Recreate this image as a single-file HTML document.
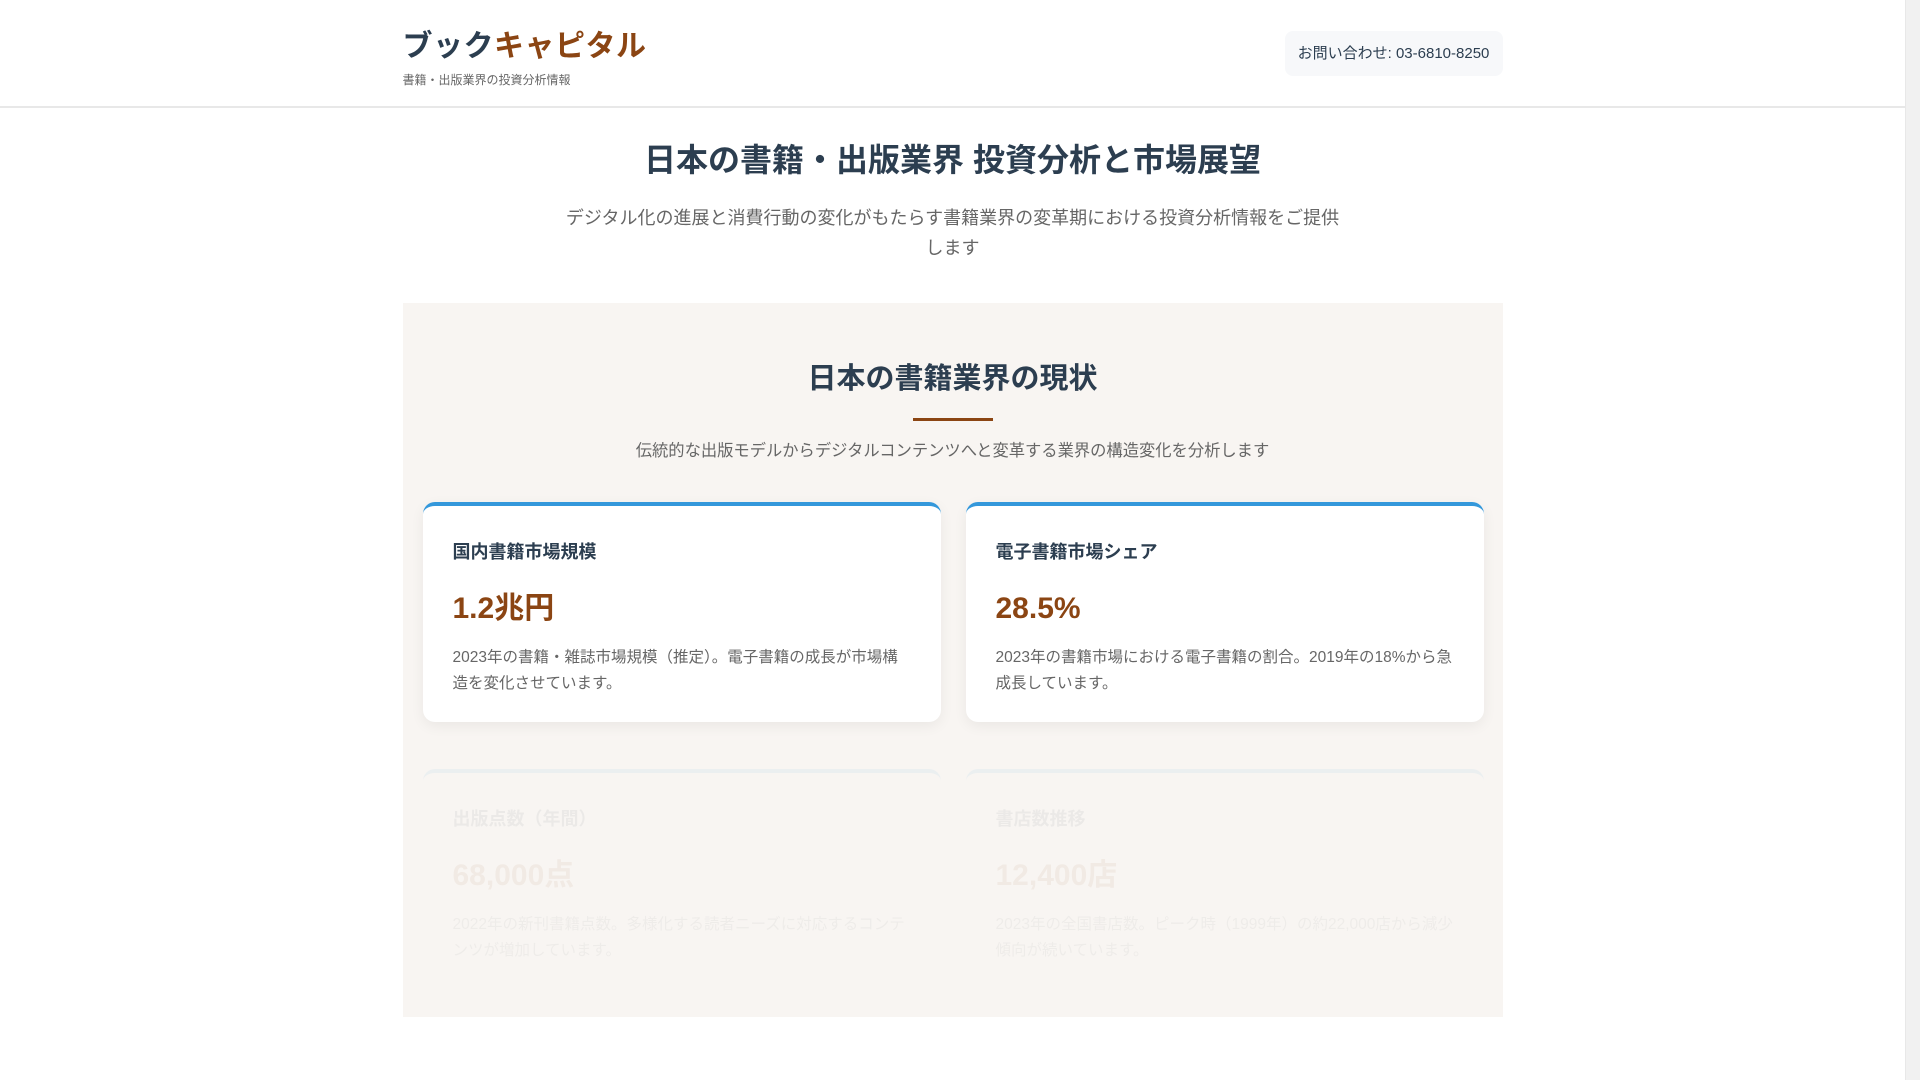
<!DOCTYPE html>
<html lang="ja"><head><meta charset="utf-8">
<style>
*{margin:0;padding:0;box-sizing:border-box}
html,body{width:1920px;height:1080px;overflow:hidden;background:#fff}
body{font-family:"Liberation Sans","Noto Sans CJK JP",sans-serif;color:#2c3e50;position:relative}
.page{width:1905px;position:absolute;left:0;top:0}
.sb{position:absolute;right:0;top:0;width:15px;height:1080px;background:#f1f1f1;border-left:1px solid #e8e8e8}
header{height:108px;border-bottom:2px solid #e8e8e8;position:relative}
.wrap{width:1100px;margin:0 auto;position:relative}
.logo{position:absolute;left:0;top:21px;font-size:30px;font-weight:bold;color:#2c3e50;letter-spacing:0.5px}
.logo span{color:#8b4513}
.tag{position:absolute;left:0;top:71px;font-size:12px;color:#666}
.contact{position:absolute;right:0;top:31px;width:218px;height:45px;background:#f7f8fa;border-radius:8px;font-size:15px;line-height:45px;text-align:center;color:#2c3e50}
h1{text-align:center;font-size:32px;margin-top:32px;line-height:40px}
.lead{width:790px;margin:23px auto 0;text-align:center;font-size:18px;line-height:30px;color:#666}
section{background:#f8f5f2;width:1100px;margin:40px auto 0;height:714px;padding-top:56px;position:relative}
h2{text-align:center;font-size:29px;line-height:40px}
.line{width:80px;height:3px;background:#8b4513;margin:19px auto 0}
.desc{text-align:center;font-size:16.3px;color:#666;margin-top:18px;line-height:24px}
.grid{display:grid;grid-template-columns:518px 518px;gap:47px 25px;padding:0 20px;margin-top:39px}
.card{background:#fff;border-radius:12px;border-top:4px solid #3498db;height:220px;padding:33px 30px 0;box-shadow:0 4px 14px rgba(0,0,0,0.06)}
.card h3{font-size:18px;line-height:26px}
.card .v{font-size:30px;font-weight:bold;color:#8b4513;margin-top:26px;line-height:36px}
.card p{font-size:15.5px;line-height:26px;color:#666;margin-top:18px;margin-right:-20px;white-space:nowrap}
.fade{opacity:0.06}
</style></head><body>
<div class="page">
<header><div class="wrap">
<div class="logo">ブック<span>キャピタル</span></div>
<div class="tag">書籍・出版業界の投資分析情報</div>
<div class="contact">お問い合わせ: 03-6810-8250</div>
</div></header>
<h1>日本の書籍・出版業界 投資分析と市場展望</h1>
<div class="lead">デジタル化の進展と消費行動の変化がもたらす書籍業界の変革期における投資分析情報をご提供します</div>
<section>
<h2>日本の書籍業界の現状</h2>
<div class="line"></div>
<div class="desc">伝統的な出版モデルからデジタルコンテンツへと変革する業界の構造変化を分析します</div>
<div class="grid">
<div class="card"><h3>国内書籍市場規模</h3><div class="v">1.2兆円</div><p>2023年の書籍・雑誌市場規模（推定）。電子書籍の成長が市場構<br>造を変化させています。</p></div>
<div class="card"><h3>電子書籍市場シェア</h3><div class="v">28.5%</div><p>2023年の書籍市場における電子書籍の割合。2019年の18%から急<br>成長しています。</p></div>
<div class="card fade"><h3>出版点数（年間）</h3><div class="v">68,000点</div><p>2022年の新刊書籍点数。多様化する読者ニーズに対応するコンテ<br>ンツが増加しています。</p></div>
<div class="card fade"><h3>書店数推移</h3><div class="v">12,400店</div><p>2023年の全国書店数。ピーク時（1999年）の約22,000店から減少<br>傾向が続いています。</p></div>
</div>
</section>
</div>
<div class="sb"></div>
</body></html>
